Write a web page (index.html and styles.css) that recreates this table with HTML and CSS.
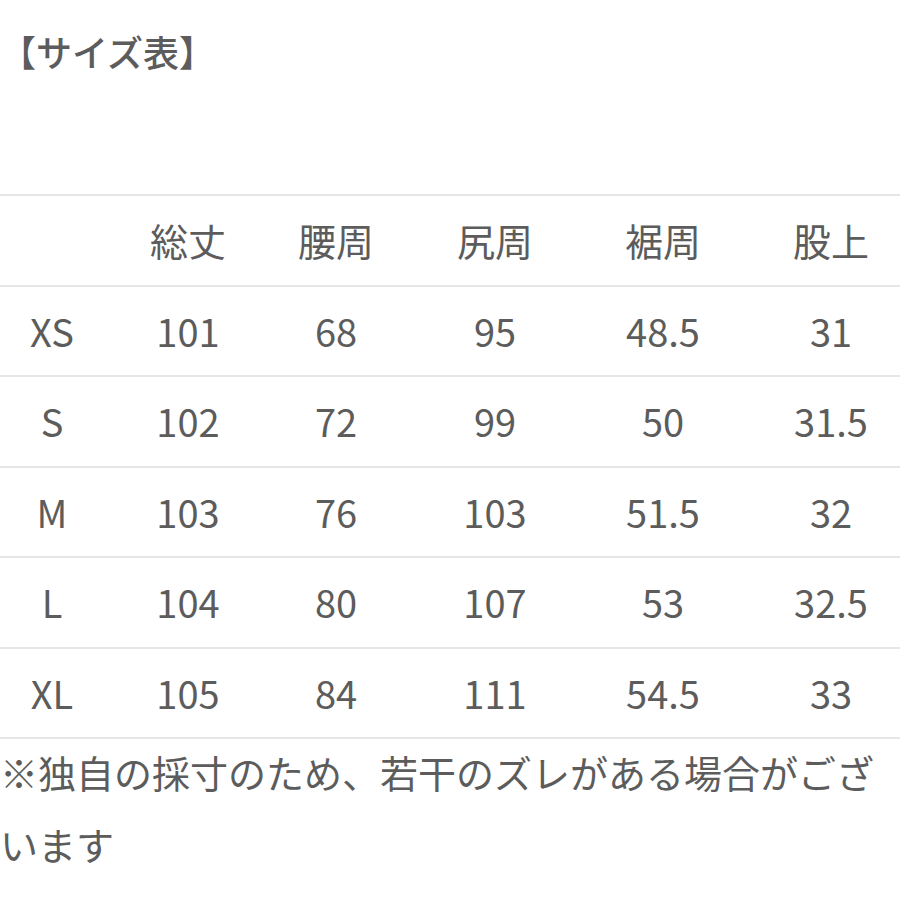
FILE: index.html
```html
<!DOCTYPE html>
<html lang="ja">
<head>
<meta charset="utf-8">
<title>サイズ表</title>
<link rel="stylesheet" href="styles.css">
</head>
<body>
<div class="page">
  <h1 class="title">【サイズ表】</h1>
  <div class="table">
    <div class="row head">
      <div class="cell"></div>
      <div class="cell">総丈</div>
      <div class="cell">腰周</div>
      <div class="cell">尻周</div>
      <div class="cell">裾周</div>
      <div class="cell last">股上</div>
    </div>
    <div class="row">
      <div class="cell">XS</div>
      <div class="cell">101</div>
      <div class="cell">68</div>
      <div class="cell">95</div>
      <div class="cell">48.5</div>
      <div class="cell last">31</div>
    </div>
    <div class="row">
      <div class="cell">S</div>
      <div class="cell">102</div>
      <div class="cell">72</div>
      <div class="cell">99</div>
      <div class="cell">50</div>
      <div class="cell last">31.5</div>
    </div>
    <div class="row">
      <div class="cell">M</div>
      <div class="cell">103</div>
      <div class="cell">76</div>
      <div class="cell">103</div>
      <div class="cell">51.5</div>
      <div class="cell last">32</div>
    </div>
    <div class="row">
      <div class="cell">L</div>
      <div class="cell">104</div>
      <div class="cell">80</div>
      <div class="cell">107</div>
      <div class="cell">53</div>
      <div class="cell last">32.5</div>
    </div>
    <div class="row final">
      <div class="cell">XL</div>
      <div class="cell">105</div>
      <div class="cell">84</div>
      <div class="cell">111</div>
      <div class="cell">54.5</div>
      <div class="cell last">33</div>
    </div>
  </div>
  <p class="note">※独自の採寸のため、若干のズレがある場合がございます</p>
</div>
</body>
</html>
```
FILE: styles.css
```css
html, body {
  margin: 0;
  padding: 0;
  background: #ffffff;
}

body {
  width: 900px;
  height: 900px;
  overflow: hidden;
  font-family: "Noto Sans CJK JP", "Noto Sans", sans-serif;
  color: #5c5c5c;
  font-size: 38px;
}

.page {
  display: flex;
  flex-direction: column;
}

.title {
  margin: 0;
  padding-top: 15px;
  font-size: 36px;
  font-weight: 500;
  line-height: 72px;
  height: 72px;
}

.table {
  margin-top: 107px;
  display: flex;
  flex-direction: column;
}

.row {
  display: grid;
  grid-template-columns: 104px 168px 128px 190px 146px 1fr;
  height: 88.5px;
  border-top: 2px solid #e6e6e6;
  align-items: center;
}

.row.final {
  border-bottom: 2px solid #e6e6e6;
}

.cell {
  text-align: center;
  line-height: 40px;
  white-space: nowrap;
}

.cell.last {
  padding-left: 26px;
}

.note {
  margin: -3px 0 0 0;
  font-size: 38px;
  line-height: 72px;
}
```
